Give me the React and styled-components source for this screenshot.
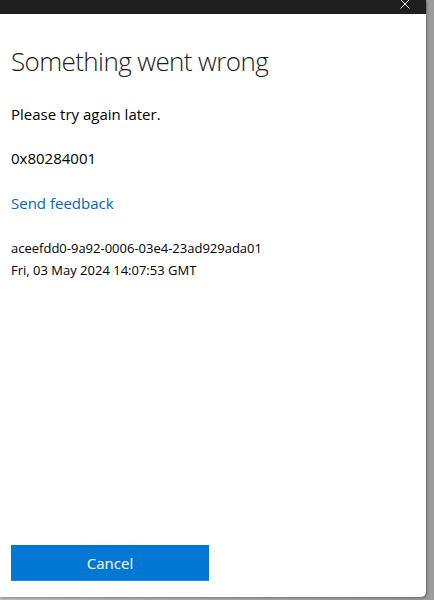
import React from "react";
import styled, { createGlobalStyle } from "styled-components";

const GlobalStyle = createGlobalStyle`
  html, body {
    margin: 0;
    padding: 0;
    width: 434px;
    height: 600px;
    overflow: hidden;
    background: linear-gradient(to right, #c4c4c4, #9c9c9c);
  }
  #root {
    width: 434px;
    height: 600px;
  }
`;

const Dialog = styled.div`
  display: flex;
  flex-direction: column;
  width: 426px;
  height: 597px;
  background: #ffffff;
  border-bottom-right-radius: 5px;
  box-shadow: 1px 1px 3px rgba(0, 0, 0, 0.35);
  font-family: "Open Sans", "Noto Sans", sans-serif;
  color: #1b1b1b;
`;

const TitleBar = styled.div`
  display: flex;
  justify-content: flex-end;
  align-items: flex-end;
  height: 14px;
  background: #1f1f1f;
  padding-right: 16px;
  overflow: hidden;
`;

const CloseGlyph = styled.svg`
  display: block;
  margin-bottom: 5px;
`;

const Body = styled.div`
  display: flex;
  flex-direction: column;
  flex: 1;
  padding: 0 11px 16px;
`;

const Heading = styled.h1`
  margin: 29px 0 0;
  font-size: 26px;
  line-height: 36px;
  font-weight: 300;
  letter-spacing: -0.6px;
  color: #1b1b1b;
`;

const Text = styled.p`
  margin: ${p => p.$top}px 0 0;
  font-size: 15px;
  line-height: 20px;
  color: ${p => (p.$link ? "#0067b8" : "#000000")};
  cursor: ${p => (p.$link ? "pointer" : "default")};
`;

const Details = styled.div`
  margin-top: 24px;
  font-size: 13px;
  line-height: 22px;
  color: #000000;
`;

const Spacer = styled.div`
  flex: 1;
`;

const CancelButton = styled.button`
  width: 198px;
  height: 36px;
  border: none;
  border-bottom: 1px solid #2b88d8;
  background: #0078d4;
  color: #ffffff;
  font-family: inherit;
  font-size: 15px;
  cursor: pointer;
`;

export default function App() {
  return (
    <>
      <GlobalStyle />
      <Dialog>
        <TitleBar>
          <CloseGlyph width="10" height="10" viewBox="0 0 10 10">
            <path d="M0.5 0.5 L9.5 9.5 M9.5 0.5 L0.5 9.5" stroke="#e6e6e6" strokeWidth="1" />
          </CloseGlyph>
        </TitleBar>
        <Body>
          <Heading>Something went wrong</Heading>
          <Text $top={25}>Please try again later.</Text>
          <Text $top={24}>0x80284001</Text>
          <Text $top={25} $link>Send feedback</Text>
          <Details>
            <div>aceefdd0-9a92-0006-03e4-23ad929ada01</div>
            <div>Fri, 03 May 2024 14:07:53 GMT</div>
          </Details>
          <Spacer />
          <CancelButton>Cancel</CancelButton>
        </Body>
      </Dialog>
    </>
  );
}
